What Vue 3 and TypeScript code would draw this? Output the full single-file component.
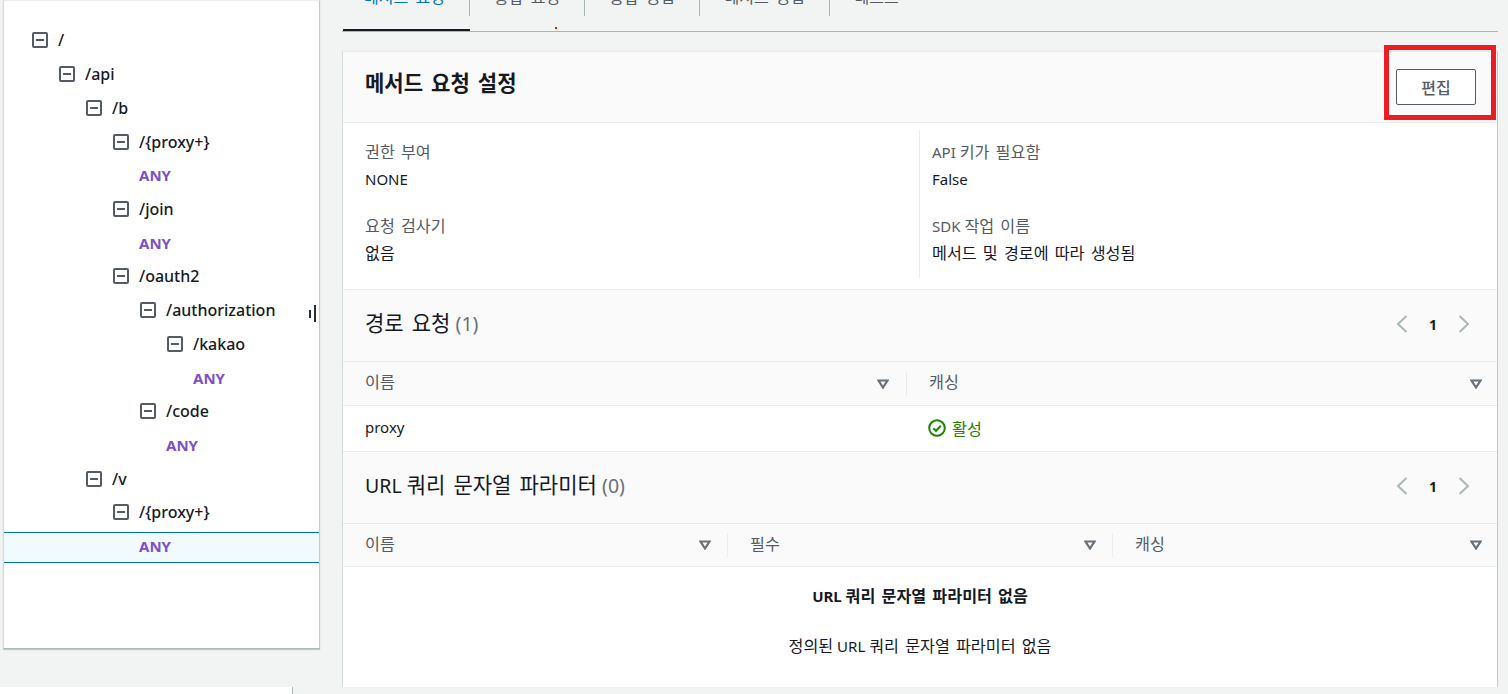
<script setup lang="ts">
type TreeRow = { label: string; level: number; method?: boolean; selected?: boolean };

const tree: TreeRow[] = [
  { label: '/', level: 0 },
  { label: '/api', level: 1 },
  { label: '/b', level: 2 },
  { label: '/{proxy+}', level: 3 },
  { label: 'ANY', level: 4, method: true },
  { label: '/join', level: 3 },
  { label: 'ANY', level: 4, method: true },
  { label: '/oauth2', level: 3 },
  { label: '/authorization', level: 4 },
  { label: '/kakao', level: 5 },
  { label: 'ANY', level: 6, method: true },
  { label: '/code', level: 4 },
  { label: 'ANY', level: 5, method: true },
  { label: '/v', level: 2 },
  { label: '/{proxy+}', level: 3 },
  { label: 'ANY', level: 4, method: true, selected: true },
];

const tabs = ['메서드 요청', '통합 요청', '통합 응답', '메서드 응답', '테스트'];
const queryCols = ['이름', '필수', '캐싱'];

// resources start at 32px, each level is 27px further in; methods sit on the parent's text column
function rowIndent(row: TreeRow): string {
  return `${(row.method ? row.level - 1 : row.level) * 27 + (row.method ? 54 : 28)}px`;
}
</script>

<template>
  <div class="page">
    <div class="columns">
      <aside class="side">
        <ul class="tree">
          <li v-for="(row, i) in tree" :key="i" class="tree-item">
            <div class="tree-row" :class="{ selected: row.selected }" :style="{ paddingLeft: rowIndent(row) }">
              <span v-if="!row.method" class="toggle"><i></i></span>
              <span :class="row.method ? 'method' : 'path'">{{ row.label }}</span>
            </div>
          </li>
        </ul>
        <span class="handle handle-a"></span>
        <span class="handle handle-b"></span>
      </aside>

      <main class="main">
        <nav class="tabs">
          <div v-for="(tab, i) in tabs" :key="tab" class="tab" :class="{ active: i === 0 }">
            <span class="tab-label" :class="{ last: i === tabs.length - 1 }">{{ tab }}</span>
          </div>
          <span class="red-dot"></span>
        </nav>

        <section class="card">
          <header class="card-head">
            <h2 class="title"><span class="ko">메서드 요청 설정</span></h2>
            <button class="edit" type="button">편집</button>
          </header>

          <div class="settings">
            <div class="settings-col">
              <div class="kv"><div class="k"><span class="ko">권한 부여</span></div><div class="v">NONE</div></div>
              <div class="kv"><div class="k"><span class="ko">요청 검사기</span></div><div class="v"><span class="ko">없음</span></div></div>
            </div>
            <div class="settings-col second">
              <div class="kv"><div class="k">API <span class="ko">키가 필요함</span></div><div class="v">False</div></div>
              <div class="kv"><div class="k">SDK <span class="ko">작업 이름</span></div><div class="v"><span class="ko">메서드 및 경로에 따라 생성됨</span></div></div>
            </div>
          </div>

          <div class="section-head">
            <h3 class="section-title"><span class="ko">경로 요청</span> <span class="count">(1)</span></h3>
            <div class="pager">
              <svg viewBox="0 0 12 20" class="chev"><path d="M10.5 2 2 10l8.5 8" /></svg>
              <b>1</b>
              <svg viewBox="0 0 12 20" class="chev"><path d="M1.5 2 10 10l-8.5 8" /></svg>
            </div>
          </div>
          <div class="thead two">
            <div class="th">
              <span class="ko">이름</span>
              <svg viewBox="0 0 12 10" class="sort"><path d="M1.5 1.5h9L6 8.5z" /></svg>
            </div>
            <div class="th">
              <span class="ko">캐싱</span>
              <svg viewBox="0 0 12 10" class="sort"><path d="M1.5 1.5h9L6 8.5z" /></svg>
            </div>
          </div>
          <div class="trow two">
            <div class="td name">proxy</div>
            <div class="td status">
              <svg viewBox="0 0 18 18" class="ok">
                <circle cx="9" cy="9" r="7.8" />
                <path d="M5.3 9.2 8 11.8l4.8-5" />
              </svg>
              <span class="ko">활성</span>
            </div>
          </div>

          <div class="section-head">
            <h3 class="section-title">URL <span class="ko">쿼리 문자열 파라미터</span> <span class="count">(0)</span></h3>
            <div class="pager">
              <svg viewBox="0 0 12 20" class="chev"><path d="M10.5 2 2 10l8.5 8" /></svg>
              <b>1</b>
              <svg viewBox="0 0 12 20" class="chev"><path d="M1.5 2 10 10l-8.5 8" /></svg>
            </div>
          </div>
          <div class="thead three">
            <div v-for="col in queryCols" :key="col" class="th">
              <span class="ko">{{ col }}</span>
              <svg viewBox="0 0 12 10" class="sort"><path d="M1.5 1.5h9L6 8.5z" /></svg>
            </div>
          </div>
          <div class="empty">
            <p class="empty-title">URL <span class="ko">쿼리 문자열 파라미터 없음</span></p>
            <p class="empty-text"><span class="ko">정의된</span> URL <span class="ko">쿼리 문자열 파라미터 없음</span></p>
          </div>
        </section>

        <div class="callout"></div>
      </main>
    </div>
    <div class="foot"></div>
  </div>
</template>

<style>
html,
body {
  margin: 0;
  background: #f2f3f3;
  overflow: hidden;
}
</style>

<style scoped>
.page {
  width: 1508px;
  height: 694px;
  overflow: hidden;
  background: #f2f3f3;
  color: #16191f;
  font-family: "Noto Sans", "Noto Sans CJK KR", sans-serif;
  font-size: 15px;
}
.columns {
  display: flex;
  height: 687px;
}
/* hangul runs a bit wider than the latin text around it */
.ko {
  font-size: 1.08em;
  word-spacing: 0.12em;
}

/* resource tree */
.side {
  position: relative;
  box-sizing: border-box;
  flex: none;
  width: 317px;
  height: 649px;
  margin-left: 3px;
  margin-right: 22px;
  padding-top: 22.5px;
  background: #fff;
  border-top: 1px solid #eaeded;
  border-left: 1px solid #d5dbdb;
  border-right: 1px solid #c4cbcc;
  border-bottom: 1px solid #aab7b8;
  box-shadow: 0 1px 1px rgba(0, 28, 36, 0.2);
}
.tree {
  margin: 0;
  padding: 0;
  list-style: none;
}
.tree-item {
  display: flex;
  align-items: center;
  height: 33.73px;
}
.tree-row {
  box-sizing: border-box;
  display: flex;
  align-items: center;
  width: 100%;
  height: 31px;
  gap: 10px;
}
.tree-row.selected {
  margin-top: 2px;
  padding-bottom: 2px;
  background: #f1faff;
  border-top: 1px solid #0073bb;
  border-bottom: 1px solid #0073bb;
}
.toggle {
  box-sizing: border-box;
  display: flex;
  align-items: center;
  justify-content: center;
  flex: none;
  width: 16px;
  height: 16px;
  border: 2px solid #545b64;
  border-radius: 2px;
}
.toggle i {
  display: block;
  width: 8px;
  height: 2px;
  background: #545b64;
}
.path {
  font-size: 16px;
  font-weight: 500;
}
.method {
  font-size: 15px;
  font-weight: 700;
  color: #7d4fc9;
}
.handle {
  position: absolute;
  background: #232f3e;
}
.handle-a {
  left: 305px;
  top: 309px;
  width: 2px;
  height: 8px;
}
.handle-b {
  left: 310px;
  top: 304px;
  width: 2px;
  height: 17px;
}

/* tabs */
.main {
  position: relative;
  flex: none;
  width: 1156px;
}
.tabs {
  position: relative;
  display: flex;
  margin-top: -14px;
  border-bottom: 1px solid #aab7b8;
}
.tab {
  padding-bottom: 13px;
  border-bottom: 2px solid transparent;
  color: #545b64;
  font-size: 16px;
  word-spacing: 0.2em;
}
.tab:first-child {
  margin-left: 1px;
}
.tab:first-child .tab-label {
  padding-left: 21px;
}
.tab.active {
  border-bottom-color: #16191f;
  color: #0073bb;
}
.tab-label {
  box-sizing: border-box;
  display: block;
  height: 30px;
  padding: 0 24px 8px 24px;
  line-height: 22px;
  border-right: 1px solid #aab7b8;
}
.tab-label.last {
  border-right: none;
}
.red-dot {
  position: absolute;
  left: 213px;
  top: 41px;
  width: 2px;
  height: 2px;
  background: #f00;
}

/* card */
.card {
  box-sizing: border-box;
  height: 636px;
  margin-top: 19px;
  overflow: hidden;
  background: #fff;
  border-top: 1px solid #eaeded;
  border-left: 1px solid #d5dbdb;
  border-right: 1px solid #c4cbcc;
}
.card-head {
  box-sizing: border-box;
  display: flex;
  align-items: center;
  justify-content: space-between;
  height: 71px;
  padding: 0 21px 0 22px;
  background: #fafafa;
  border-bottom: 1px solid #eaeded;
}
.title {
  margin: 0;
  padding-bottom: 7px;
  font-size: 19.5px;
  font-weight: 700;
  line-height: 24px;
}
.edit {
  box-sizing: border-box;
  width: 80px;
  height: 36px;
  padding: 0;
  background: #fff;
  border: 1px solid #545b64;
  border-radius: 2px;
  color: #545b64;
  font: 500 16px "Noto Sans", "Noto Sans CJK KR", sans-serif;
}
.settings {
  display: grid;
  grid-template-columns: 576px 1fr;
  height: 166px;
  padding-top: 7px;
  box-sizing: border-box;
}
.settings-col {
  display: flex;
  flex-direction: column;
  gap: 20px;
  height: 148px;
  padding: 9px 0 0 22px;
  box-sizing: border-box;
}
.settings-col.second {
  border-left: 1px solid #eaeded;
  padding-left: 12px;
}
.k {
  color: #545b64;
  line-height: 27px;
}
.v {
  line-height: 27px;
}

/* sections */
.section-head {
  box-sizing: border-box;
  display: flex;
  align-items: center;
  justify-content: space-between;
  height: 73px;
  padding: 0 27px 0 22px;
  background: #fafafa;
  border-top: 1px solid #eaeded;
  border-bottom: 1px solid #eaeded;
}
.section-title {
  margin: 0;
  padding-bottom: 5px;
  font-size: 19.5px;
  font-weight: 400;
  line-height: 24px;
}
.count {
  color: #687078;
}
.pager {
  display: flex;
  align-items: center;
  gap: 21px;
  padding-bottom: 3px;
  font-size: 14px;
}
.pager b {
  font-weight: 700;
}
.chev {
  width: 12px;
  height: 20px;
  fill: none;
  stroke: #aab7b8;
  stroke-width: 2;
}
.thead {
  box-sizing: border-box;
  display: grid;
  height: 44px;
  background: #fafafa;
  border-bottom: 1px solid #eaeded;
  align-items: center;
}
.thead.three {
  height: 43px;
}
.two {
  grid-template-columns: 563px 1fr;
}
.three {
  grid-template-columns: 384px 385px 1fr;
}
.th {
  box-sizing: border-box;
  display: flex;
  align-items: center;
  justify-content: space-between;
  height: 24px;
  padding: 0 17px 0 22px;
  color: #545b64;
  line-height: 22px;
}
.th > span {
  margin-bottom: 3px;
}
.th + .th {
  border-left: 1px solid #eaeded;
}
.three .th {
  padding-right: 16px;
}
.thead .th:last-child {
  padding-right: 15px;
}
.sort {
  flex: none;
  width: 12px;
  height: 10px;
  fill: none;
  stroke: #687078;
  stroke-width: 2.2;
}
.trow {
  box-sizing: border-box;
  display: grid;
  height: 45px;
  align-items: center;
}
.td {
  padding-left: 22px;
  padding-bottom: 2px;
}
.td.name {
  padding-bottom: 4px;
}
.status {
  display: flex;
  align-items: center;
  gap: 6px;
  color: #1d8102;
}
.ok {
  flex: none;
  width: 18px;
  height: 18px;
  fill: none;
  stroke: #1d8102;
  stroke-width: 2;
}
.empty {
  text-align: center;
  padding-top: 16px;
}
.empty p {
  margin: 0;
  line-height: 26px;
}
.empty-title {
  font-weight: 700;
  margin-bottom: 24px !important;
}

/* annotation drawn on the screenshot */
.callout {
  position: absolute;
  left: 1042px;
  top: 45px;
  width: 112px;
  height: 75px;
  box-sizing: border-box;
  border: 5px solid #ed1c24;
}

.foot {
  box-sizing: border-box;
  width: 293px;
  height: 7px;
  background: #fff;
  border-right: 1px solid #aab7b8;
}
</style>
